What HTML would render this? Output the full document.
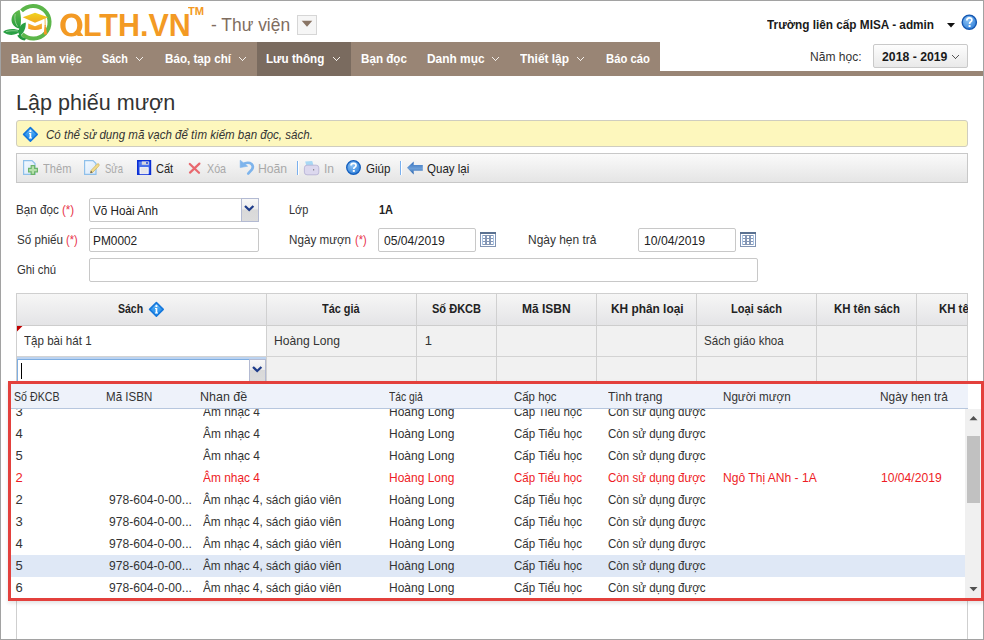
<!DOCTYPE html>
<html><head><meta charset="utf-8"><title>Lập phiếu mượn</title>
<style>
html,body{margin:0;padding:0;}
body{width:984px;height:640px;overflow:hidden;position:relative;background:#fff;font-family:"Liberation Sans",sans-serif;}
.a{position:absolute;box-sizing:border-box;}
.t{position:absolute;white-space:nowrap;transform-origin:0 0;}
svg{position:absolute;overflow:visible;}
</style></head>
<body>
<!-- logo -->
<svg style="left:0;top:0" width="56" height="44" viewBox="0 0 56 44">
  <defs>
    <linearGradient id="capg" x1="0" y1="0" x2="0" y2="1"><stop offset="0" stop-color="#f0d41e"/><stop offset="1" stop-color="#f2a91c"/></linearGradient>
    <linearGradient id="leafg" x1="0" y1="0" x2="0" y2="1"><stop offset="0" stop-color="#62ba4a"/><stop offset="1" stop-color="#239c3e"/></linearGradient>
    <linearGradient id="capb" x1="0" y1="0" x2="0" y2="1"><stop offset="0" stop-color="#f7b534"/><stop offset="1" stop-color="#f39a1c"/></linearGradient>
  </defs>
  <path d="M21.5 10.9 A16.3 16.3 0 1 1 22.3 34.3" fill="none" stroke="#5cb64a" stroke-width="4"/>
  <path d="M19.5 9.8 C14 12 11 16 11.6 21 C12.2 25 15.5 28 19.8 28.6 C21.4 24 21.4 15 19.5 9.8 Z" fill="url(#leafg)"/>
  <path d="M15.2 14 C14.4 18 15 23 17.6 26.5" fill="none" stroke="#c8e8c0" stroke-width="0.6"/>
  <path d="M3 32 C7 28.6 14 28.2 20.8 30.8 C17 35.4 9 36.6 3 32 Z" fill="#2aa044"/>
  <path d="M6 31.6 C10 30.6 14 30.6 18 31" fill="none" stroke="#bfe4bb" stroke-width="0.6"/>
  <path d="M25.8 22.6 C21 23.6 18.6 27.6 18.6 32 C18.6 34 19 35.4 19.6 36 C23.6 33.6 26 28.6 25.8 22.6 Z" fill="#2aa044"/>
  <path d="M17.2 35.6 C19 38.6 21.4 40.4 24.6 40.6 L26.4 38.6 C23.4 38 21.4 36.6 20.4 34.4 Z" fill="#21973c"/>
  <path d="M22.7 17.2 L35 12.7 L48.1 17.2 L35 22.7 Z" fill="url(#capg)"/>
  <path d="M28.2 23.4 L35 26.2 L41.9 23.4 L41.9 28.8 Q35 31.2 28.2 28.8 Z" fill="url(#capb)"/>
  <path d="M45 17.6 L45.2 25.4" stroke="#f2b640" stroke-width="0.9"/>
  <circle cx="45.2" cy="25.8" r="0.9" fill="#f39a24"/>
  <path d="M44.4 26.4 L46 26.4 L47 34.4 L43.8 34.4 Z" fill="#f39a24"/>
</svg>
<svg style="left:0;top:0" width="100" height="44"><path fill-rule="evenodd" fill="#f39a24" d="M71.35 13.5 C78 13.5 82.4 18.3 82.4 25 C82.4 31.7 78 36.5 71.35 36.5 C64.7 36.5 60.3 31.7 60.3 25 C60.3 18.3 64.7 13.5 71.35 13.5 Z M71.35 17.5 C67.6 17.5 65.5 20.6 65.5 25.2 C65.5 29.9 67.6 33 71.35 33 C75.1 33 77.2 29.9 77.2 25.2 C77.2 20.6 75.1 17.5 71.35 17.5 Z"/><path fill="#f39a24" d="M74.6 31.2 L78.6 29.6 L83.4 35.9 L77.6 35.9 Z"/></svg>
<!-- thu vien dropdown -->
<div class="a" style="left:297px;top:15px;width:20px;height:20px;border:1px solid #d6d6d6;background:#f6f6f6;"></div>
<svg style="left:301px;top:20px" width="12" height="8"><path d="M0.7 0.8 L11.3 0.8 L6 6.8 Z" fill="#8a7565"/></svg>
<!-- user dropdown triangle + help -->
<svg style="left:946px;top:22px" width="10" height="7"><path d="M1 1 L9 1 L5 5.5 Z" fill="#111"/></svg>
<svg style="left:961px;top:14px" width="17" height="17" viewBox="0 0 17 17">
  <defs><radialGradient id="hg" cx="0.4" cy="0.35" r="0.7"><stop offset="0" stop-color="#8cc4f6"/><stop offset="1" stop-color="#2f7ed8"/></radialGradient></defs>
  <circle cx="8.3" cy="8.2" r="7.1" fill="url(#hg)" stroke="#1456b0" stroke-width="1.4"/>
  <path d="M5.8 6.4 Q5.8 3.9 8.4 3.9 Q10.9 3.9 10.9 6.1 Q10.9 7.4 9.5 8.1 Q8.6 8.6 8.6 9.9" fill="none" stroke="#fff" stroke-width="1.7"/>
  <rect x="7.6" y="11.1" width="2" height="1.9" fill="#fff"/>
</svg>
<!-- nav -->
<div class="a" style="left:0;top:42px;width:660px;height:34px;background:#998575;"></div>
<div class="a" style="left:660px;top:71px;width:324px;height:5px;background:#998575;"></div>
<div class="a" style="left:257px;top:42px;width:94px;height:34px;background:#7a6b5f;"></div>
<svg style="left:0;top:0" width="984" height="80" shape-rendering="crispEdges"><g fill="#f4f0ec"><rect x="136" y="57" width="1" height="1"/><rect x="137" y="58" width="1" height="1"/><rect x="138" y="59" width="1" height="1"/><rect x="139" y="60" width="1" height="1"/><rect x="140" y="59" width="1" height="1"/><rect x="141" y="58" width="1" height="1"/><rect x="142" y="57" width="1" height="1"/><rect x="239" y="57" width="1" height="1"/><rect x="240" y="58" width="1" height="1"/><rect x="241" y="59" width="1" height="1"/><rect x="242" y="60" width="1" height="1"/><rect x="243" y="59" width="1" height="1"/><rect x="244" y="58" width="1" height="1"/><rect x="245" y="57" width="1" height="1"/><rect x="333" y="57" width="1" height="1"/><rect x="334" y="58" width="1" height="1"/><rect x="335" y="59" width="1" height="1"/><rect x="336" y="60" width="1" height="1"/><rect x="337" y="59" width="1" height="1"/><rect x="338" y="58" width="1" height="1"/><rect x="339" y="57" width="1" height="1"/><rect x="492" y="57" width="1" height="1"/><rect x="493" y="58" width="1" height="1"/><rect x="494" y="59" width="1" height="1"/><rect x="495" y="60" width="1" height="1"/><rect x="496" y="59" width="1" height="1"/><rect x="497" y="58" width="1" height="1"/><rect x="498" y="57" width="1" height="1"/><rect x="577" y="57" width="1" height="1"/><rect x="578" y="58" width="1" height="1"/><rect x="579" y="59" width="1" height="1"/><rect x="580" y="60" width="1" height="1"/><rect x="581" y="59" width="1" height="1"/><rect x="582" y="58" width="1" height="1"/><rect x="583" y="57" width="1" height="1"/></g></svg>
<!-- year box -->
<div class="a" style="left:873px;top:44px;width:95px;height:24px;border:1px solid #c9c9c9;border-radius:2px;background:linear-gradient(#fdfdfd,#e9e9e9);"></div>
<svg style="left:0;top:0" width="984" height="80" shape-rendering="crispEdges"><g fill="#555"><rect x="952" y="55" width="1" height="1"/><rect x="953" y="56" width="1" height="1"/><rect x="954" y="57" width="1" height="1"/><rect x="955" y="58" width="1" height="1"/><rect x="956" y="57" width="1" height="1"/><rect x="957" y="56" width="1" height="1"/><rect x="958" y="55" width="1" height="1"/></g></svg>
<!-- info box -->
<div class="a" style="left:16px;top:120px;width:952px;height:27px;border:1px solid #cfcdc0;border-radius:3px;background:#fdf7bd;"></div>
<svg style="left:22px;top:126px" width="17" height="17" viewBox="0 0 17 17">
  <defs><linearGradient id="ig" x1="0" y1="0" x2="0" y2="1"><stop offset="0" stop-color="#9cd2fa"/><stop offset="0.45" stop-color="#3a9cf0"/><stop offset="1" stop-color="#1a88ec"/></linearGradient></defs>
  <path d="M8.4 1.6 L15.2 8.4 L8.4 15.2 L1.6 8.4 Z" fill="url(#ig)" stroke="#1477dc" stroke-width="1.6" stroke-linejoin="round"/>
  <rect x="7.5" y="4.2" width="1.8" height="1.8" fill="#fff"/>
  <path d="M7 7 L9.3 7 L9.3 11.6 L10 11.6 L10 12.6 L6.9 12.6 L6.9 11.6 L7.6 11.6 L7.6 8 L7 8 Z" fill="#fff"/>
</svg>
<!-- toolbar -->
<div class="a" style="left:16px;top:153px;width:952px;height:30px;border:1px solid #c8c8c8;background:linear-gradient(#fafafa,#e5e5e5);"></div>
<!-- icon: them -->
<svg style="left:0;top:0" width="984" height="200">
  <defs>
    <linearGradient id="docg" x1="0" y1="0" x2="1" y2="1"><stop offset="0" stop-color="#f4faff"/><stop offset="1" stop-color="#d6e6f8"/></linearGradient>
    <linearGradient id="flg" x1="0" y1="0" x2="0" y2="1"><stop offset="0" stop-color="#5d86f2"/><stop offset="1" stop-color="#2a50e0"/></linearGradient>
    <linearGradient id="ag2" x1="0" y1="0" x2="0" y2="1"><stop offset="0" stop-color="#2f6cbc"/><stop offset="0.55" stop-color="#6d9fd8"/><stop offset="1" stop-color="#1f5ca8"/></linearGradient>
  </defs>
  <!-- them doc -->
  <path d="M23.6 160.6 L32 160.6 L35 163.6 L35 174.4 L23.6 174.4 Z" fill="url(#docg)" stroke="#8fc0ea" stroke-width="1.2"/>
  <path d="M28.6 165.6 L32.6 165.6 L32.6 168.6 L37.4 168.6 L37.4 171.6 L32.6 171.6 L32.6 174.4 L28.6 174.4 L28.6 171.6 L28.6 171.6 Z" fill="none"/>
  <path d="M31.2 165.6 L34.6 165.6 L34.6 168.4 L37.4 168.4 L37.4 171.8 L34.6 171.8 L34.6 174.4 L31.2 174.4 L31.2 171.8 L28.6 171.8 L28.6 168.4 L31.2 168.4 Z" fill="#b6e0ac" stroke="#6cb46a" stroke-width="1.2"/>
  <!-- sua doc -->
  <path d="M84.6 160.6 L93 160.6 L96 163.6 L96 174.4 L84.6 174.4 Z" fill="url(#docg)" stroke="#8fc0ea" stroke-width="1.2"/>
  <path d="M91 170.5 L97 164.2 Q98.2 163.2 99 164.2 Q99.6 165.2 98.6 166.2 L92.6 172.4 L90.4 173 Z" fill="#f2dc8c" stroke="#d2b460" stroke-width="0.8"/>
  <path d="M90.4 173 L91 170.8 L92.6 172.4 Z" fill="#555"/>
  <!-- save -->
  <rect x="137.8" y="160.8" width="12.6" height="13.4" fill="url(#flg)" stroke="#0a2ed6" stroke-width="1.6"/>
  <rect x="141.8" y="161.4" width="7" height="3.4" fill="#d8d8de"/>
  <rect x="146.2" y="162" width="1.6" height="2" fill="#2a4fe0"/>
  <rect x="140" y="167.6" width="8.2" height="6.2" fill="#e6e6ea" stroke="#fff" stroke-width="0.8"/>
  <!-- xoa -->
  <path d="M189.8 164 L199 172.8 M199.4 163.6 L190 172.6" stroke="#e8686e" stroke-width="2.2" stroke-linecap="round"/>
  <!-- hoan -->
  <path d="M244.5 163.4 Q249 162 251.5 164 Q254 166.5 252 169.5 L248.2 173.6" fill="none" stroke="#7eb4ec" stroke-width="2.6" stroke-linecap="round"/>
  <path d="M240.2 160.2 L247.6 166.2 L240.2 167.6 Z" fill="#7eb4ec" stroke="#7eb4ec" stroke-width="0.6" stroke-linejoin="round"/>
  <!-- sep -->
  <rect x="297" y="161" width="1" height="14" fill="#7ab0ee"/>
  <rect x="298" y="161" width="1" height="14" fill="#fff"/>
  <!-- printer -->
  <path d="M305.2 161.6 L312.2 161 L313.6 165.8 L306.4 166.4 Z" fill="#a8d8f4"/>
  <rect x="304.4" y="165.2" width="14.4" height="9.6" rx="2.6" fill="#dcd8ee" stroke="#b8b4d6" stroke-width="0.9"/>
  <rect x="313" y="169.2" width="1.2" height="1.2" fill="#777"/>
  <!-- help -->
  <circle cx="353.5" cy="167.5" r="6.8" fill="url(#hg)" stroke="#125ebe" stroke-width="1.3"/>
  <path d="M351 165.6 Q351 163.4 353.6 163.4 Q356 163.4 356 165.4 Q356 166.7 354.7 167.3 Q353.8 167.8 353.8 169" fill="none" stroke="#fff" stroke-width="1.7"/>
  <rect x="352.8" y="170" width="2" height="1.9" fill="#fff"/>
  <!-- sep -->
  <rect x="400" y="161" width="1" height="14" fill="#7ab0ee"/>
  <rect x="401" y="161" width="1" height="14" fill="#fff"/>
  <!-- back arrow -->
  <path d="M407 167.7 L413.7 161.4 L413.7 164.9 L422.8 164.9 L422.8 170.8 L413.7 170.8 L413.7 174.6 Z" fill="url(#ag2)"/>
</svg>
<!-- form inputs -->
<div class="a" style="left:89px;top:198px;width:170px;height:24px;border:1px solid #c8c8c8;border-radius:2px;background:#fff;"></div>
<div class="a" style="left:241px;top:198px;width:18px;height:24px;border:1px solid #b3bad2;background:linear-gradient(#f8f8f8 0%,#ececec 45%,#d9d9d9 50%,#dcdcdc 100%);"></div>
<svg style="left:244px;top:205px" width="11" height="7"><path d="M1 1 L5.2 5 L9.4 1" fill="none" stroke="#1f3d8a" stroke-width="2.3"/></svg>
<div class="a" style="left:89px;top:228px;width:170px;height:24px;border:1px solid #c8c8c8;border-radius:2px;background:#fff;"></div>
<div class="a" style="left:89px;top:258px;width:669px;height:24px;border:1px solid #c8c8c8;border-radius:2px;background:#fff;"></div>
<div class="a" style="left:378px;top:228px;width:98px;height:24px;border:1px solid #c8c8c8;border-radius:2px;background:#fff;"></div>
<div class="a" style="left:638px;top:228px;width:98px;height:24px;border:1px solid #c8c8c8;border-radius:2px;background:#fff;"></div>
<svg style="left:480px;top:232px" width="16" height="15" viewBox="0 0 16 15" shape-rendering="crispEdges"><rect x="0" y="0" width="16" height="15" fill="#8194b3"/><rect x="1" y="2" width="14" height="12" fill="#fff"/><rect x="0" y="0" width="16" height="2" fill="#5b7292"/><rect x="2" y="3" width="12" height="10" fill="#8497b6"/><rect x="3" y="4" width="2" height="2" fill="#fff"/><rect x="3" y="7" width="2" height="2" fill="#fff"/><rect x="3" y="10" width="2" height="2" fill="#fff"/><rect x="7" y="4" width="2" height="2" fill="#fff"/><rect x="7" y="7" width="2" height="2" fill="#fff"/><rect x="7" y="10" width="2" height="2" fill="#fff"/><rect x="11" y="4" width="2" height="2" fill="#fff"/><rect x="11" y="7" width="2" height="2" fill="#fff"/><rect x="11" y="10" width="2" height="2" fill="#fff"/><rect x="2" y="3" width="1" height="10" fill="#a9c4e6"/><rect x="13" y="3" width="1" height="10" fill="#a9c4e6"/></svg>
<svg style="left:740px;top:232px" width="16" height="15" viewBox="0 0 16 15" shape-rendering="crispEdges"><rect x="0" y="0" width="16" height="15" fill="#8194b3"/><rect x="1" y="2" width="14" height="12" fill="#fff"/><rect x="0" y="0" width="16" height="2" fill="#5b7292"/><rect x="2" y="3" width="12" height="10" fill="#8497b6"/><rect x="3" y="4" width="2" height="2" fill="#fff"/><rect x="3" y="7" width="2" height="2" fill="#fff"/><rect x="3" y="10" width="2" height="2" fill="#fff"/><rect x="7" y="4" width="2" height="2" fill="#fff"/><rect x="7" y="7" width="2" height="2" fill="#fff"/><rect x="7" y="10" width="2" height="2" fill="#fff"/><rect x="11" y="4" width="2" height="2" fill="#fff"/><rect x="11" y="7" width="2" height="2" fill="#fff"/><rect x="11" y="10" width="2" height="2" fill="#fff"/><rect x="2" y="3" width="1" height="10" fill="#a9c4e6"/><rect x="13" y="3" width="1" height="10" fill="#a9c4e6"/></svg>
<!-- grid -->
<div class="a" style="left:16px;top:293px;width:952px;height:360px;border:1px solid #cfcfcf;background:#fff;"></div>
<div class="a" style="left:17px;top:294px;width:950px;height:31px;background:linear-gradient(#f6f6f6,#e4e4e6);"></div>
<div class="a" style="left:17px;top:325px;width:950px;height:1px;background:#cdcdcd;"></div>
<div class="a" style="left:267px;top:326px;width:700px;height:60px;background:#f1f1f1;"></div>
<div class="a" style="left:17px;top:356px;width:950px;height:1px;background:#d3d3d3;"></div>
<div class="a" style="left:266px;top:294px;width:1px;height:92px;background:#d0d0d0;"></div>
<div class="a" style="left:416px;top:294px;width:1px;height:92px;background:#d0d0d0;"></div>
<div class="a" style="left:496px;top:294px;width:1px;height:92px;background:#d0d0d0;"></div>
<div class="a" style="left:596px;top:294px;width:1px;height:92px;background:#d0d0d0;"></div>
<div class="a" style="left:696px;top:294px;width:1px;height:92px;background:#d0d0d0;"></div>
<div class="a" style="left:816px;top:294px;width:1px;height:92px;background:#d0d0d0;"></div>
<div class="a" style="left:916px;top:294px;width:1px;height:92px;background:#d0d0d0;"></div>
<svg style="left:148px;top:301px" width="17" height="17" viewBox="0 0 17 17">
  <path d="M8.4 1.6 L15.2 8.4 L8.4 15.2 L1.6 8.4 Z" fill="url(#ig)" stroke="#1477dc" stroke-width="1.6" stroke-linejoin="round"/>
  <rect x="7.5" y="4.2" width="1.8" height="1.8" fill="#fff"/>
  <path d="M7 7 L9.3 7 L9.3 11.6 L10 11.6 L10 12.6 L6.9 12.6 L6.9 11.6 L7.6 11.6 L7.6 8 L7 8 Z" fill="#fff"/>
</svg>
<svg style="left:17px;top:326px" width="6" height="6"><path d="M0 0 L5.5 0 L0 5.5 Z" fill="#c00000"/></svg>
<!-- editor row -->
<div class="a" style="left:17px;top:357px;width:249px;height:2px;background:#bcd3f0;"></div>
<div class="a" style="left:17px;top:359px;width:249px;height:30px;border:1px solid #7eaee2;border-right:none;background:#fff;"></div>
<div class="a" style="left:249px;top:359px;width:17px;height:23px;border:1px solid #b3bad2;background:linear-gradient(#f8f8f8 0%,#ececec 45%,#d9d9d9 50%,#dcdcdc 100%);"></div>
<svg style="left:252px;top:366px" width="11" height="7"><path d="M1 1 L5.2 5 L9.4 1" fill="none" stroke="#1f3d8a" stroke-width="2.3"/></svg>
<div class="a" style="left:21px;top:363px;width:1px;height:16px;background:#000;"></div>
<!-- TEXTS placeholder before popup -->
<div class="t" style="left:82.63px;top:10.00px;font-size:31px;line-height:31px;color:#f39a24;font-weight:bold;transform:scaleX(0.9826);">LTH.VN</div>
<div class="t" style="left:188.00px;top:5.50px;font-size:11px;line-height:11px;color:#f39a24;font-weight:bold;transform:scaleX(1.0179);">TM</div>
<div class="t" style="left:210.80px;top:15.80px;font-size:18px;line-height:18px;color:#7f6d60;transform:scaleX(0.9672);">- Thư viện</div>
<div class="t" style="left:767.00px;top:18.30px;font-size:13px;line-height:13px;color:#1a1a1a;font-weight:bold;transform:scaleX(0.9062);">Trường liên cấp MISA - admin</div>
<div class="t" style="left:11.40px;top:51.60px;font-size:13px;line-height:13px;color:#ffffff;font-weight:bold;transform:scaleX(0.8921);">Bàn làm việc</div>
<div class="t" style="left:101.60px;top:51.60px;font-size:13px;line-height:13px;color:#ffffff;font-weight:bold;transform:scaleX(0.8352);">Sách</div>
<div class="t" style="left:164.80px;top:51.60px;font-size:13px;line-height:13px;color:#ffffff;font-weight:bold;transform:scaleX(0.8965);">Báo, tạp chí</div>
<div class="t" style="left:266.40px;top:51.60px;font-size:13px;line-height:13px;color:#ffffff;font-weight:bold;transform:scaleX(0.8961);">Lưu thông</div>
<div class="t" style="left:361.20px;top:51.60px;font-size:13px;line-height:13px;color:#ffffff;font-weight:bold;transform:scaleX(0.8952);">Bạn đọc</div>
<div class="t" style="left:426.80px;top:51.60px;font-size:13px;line-height:13px;color:#ffffff;font-weight:bold;transform:scaleX(0.9152);">Danh mục</div>
<div class="t" style="left:520.30px;top:51.60px;font-size:13px;line-height:13px;color:#ffffff;font-weight:bold;transform:scaleX(0.9176);">Thiết lập</div>
<div class="t" style="left:606.00px;top:51.60px;font-size:13px;line-height:13px;color:#ffffff;font-weight:bold;transform:scaleX(0.8671);">Báo cáo</div>
<div class="t" style="left:810.37px;top:49.90px;font-size:13px;line-height:13px;color:#333;transform:scaleX(0.9256);">Năm học:</div>
<div class="t" style="left:882.00px;top:49.90px;font-size:13px;line-height:13px;color:#1a1a1a;font-weight:bold;transform:scaleX(0.9427);">2018 - 2019</div>
<div class="t" style="left:16.02px;top:91.50px;font-size:22px;line-height:22px;color:#333;transform:scaleX(0.9798);">Lập phiếu mượn</div>
<div class="t" style="left:45.90px;top:127.90px;font-size:13px;line-height:13px;color:#333;font-style:italic;transform:scaleX(0.8868);">Có thể sử dụng mã vạch để tìm kiếm bạn đọc, sách.</div>
<div class="t" style="left:43.30px;top:161.70px;font-size:13px;line-height:13px;color:#a9a9a9;transform:scaleX(0.8549);">Thêm</div>
<div class="t" style="left:104.50px;top:161.70px;font-size:13px;line-height:13px;color:#a9a9a9;transform:scaleX(0.7291);">Sửa</div>
<div class="t" style="left:156.20px;top:161.70px;font-size:13px;line-height:13px;color:#222;transform:scaleX(0.8488);">Cất</div>
<div class="t" style="left:206.60px;top:161.70px;font-size:13px;line-height:13px;color:#a9a9a9;transform:scaleX(0.8242);">Xóa</div>
<div class="t" style="left:258.46px;top:161.70px;font-size:13px;line-height:13px;color:#a9a9a9;transform:scaleX(0.9381);">Hoãn</div>
<div class="t" style="left:323.67px;top:161.70px;font-size:13px;line-height:13px;color:#a9a9a9;transform:scaleX(0.9259);">In</div>
<div class="t" style="left:366.30px;top:161.70px;font-size:13px;line-height:13px;color:#222;transform:scaleX(0.8887);">Giúp</div>
<div class="t" style="left:427.00px;top:161.70px;font-size:13px;line-height:13px;color:#222;transform:scaleX(0.8870);">Quay lại</div>
<div class="t" style="left:15.70px;top:203.30px;font-size:13px;line-height:13px;color:#333;transform:scaleX(0.8961);">Bạn đọc</div>
<div class="t" style="left:61.50px;top:203.30px;font-size:13px;line-height:13px;color:#e8334a;transform:scaleX(0.8888);">(*)</div>
<div class="t" style="left:16.60px;top:233.00px;font-size:13px;line-height:13px;color:#333;transform:scaleX(0.8945);">Số phiếu</div>
<div class="t" style="left:66.00px;top:233.00px;font-size:13px;line-height:13px;color:#e8334a;transform:scaleX(0.8515);">(*)</div>
<div class="t" style="left:16.60px;top:263.00px;font-size:13px;line-height:13px;color:#333;transform:scaleX(0.8705);">Ghi chú</div>
<div class="t" style="left:93.00px;top:204.00px;font-size:13px;line-height:13px;color:#222;transform:scaleX(0.9002);">Võ Hoài Anh</div>
<div class="t" style="left:93.09px;top:234.00px;font-size:13px;line-height:13px;color:#222;transform:scaleX(0.9133);">PM0002</div>
<div class="t" style="left:288.96px;top:203.10px;font-size:13px;line-height:13px;color:#333;transform:scaleX(0.8412);">Lớp</div>
<div class="t" style="left:378.70px;top:203.10px;font-size:13px;line-height:13px;color:#222;font-weight:bold;transform:scaleX(0.8416);">1A</div>
<div class="t" style="left:288.90px;top:232.90px;font-size:13px;line-height:13px;color:#333;transform:scaleX(0.8968);">Ngày mượn</div>
<div class="t" style="left:355.10px;top:232.90px;font-size:13px;line-height:13px;color:#e8334a;transform:scaleX(0.8515);">(*)</div>
<div class="t" style="left:384.30px;top:234.00px;font-size:13px;line-height:13px;color:#222;transform:scaleX(0.9332);">05/04/2019</div>
<div class="t" style="left:527.58px;top:232.80px;font-size:13px;line-height:13px;color:#333;transform:scaleX(0.9191);">Ngày hẹn trả</div>
<div class="t" style="left:644.20px;top:234.00px;font-size:13px;line-height:13px;color:#222;transform:scaleX(0.9378);">10/04/2019</div>
<div class="t" style="left:117.90px;top:302.00px;font-size:13px;line-height:13px;color:#222;font-weight:bold;transform:scaleX(0.8095);">Sách</div>
<div class="t" style="left:322.20px;top:302.00px;font-size:13px;line-height:13px;color:#222;font-weight:bold;transform:scaleX(0.8405);">Tác giả</div>
<div class="t" style="left:432.00px;top:302.00px;font-size:13px;line-height:13px;color:#222;font-weight:bold;transform:scaleX(0.8486);">Số ĐKCB</div>
<div class="t" style="left:522.40px;top:302.00px;font-size:13px;line-height:13px;color:#222;font-weight:bold;transform:scaleX(0.9228);">Mã ISBN</div>
<div class="t" style="left:611.00px;top:302.00px;font-size:13px;line-height:13px;color:#222;font-weight:bold;transform:scaleX(0.9133);">KH phân loại</div>
<div class="t" style="left:731.00px;top:302.00px;font-size:13px;line-height:13px;color:#222;font-weight:bold;transform:scaleX(0.8496);">Loại sách</div>
<div class="t" style="left:833.90px;top:302.00px;font-size:13px;line-height:13px;color:#222;font-weight:bold;transform:scaleX(0.8764);">KH tên sách</div>
<div class="t" style="left:938.80px;top:302.00px;font-size:13px;line-height:13px;color:#222;font-weight:bold;transform:scaleX(0.8764);">KH tên sách</div>
<div class="t" style="left:24.00px;top:334.30px;font-size:13px;line-height:13px;color:#333;transform:scaleX(0.8909);">Tập bài hát 1</div>
<div class="t" style="left:273.67px;top:334.30px;font-size:13px;line-height:13px;color:#333;transform:scaleX(0.9295);">Hoàng Long</div>
<div class="t" style="left:424.80px;top:334.30px;font-size:13px;line-height:13px;color:#333;">1</div>
<div class="t" style="left:704.00px;top:334.30px;font-size:13px;line-height:13px;color:#333;transform:scaleX(0.8895);">Sách giáo khoa</div>
<div class="a" style="left:968px;top:293px;width:15px;height:34px;background:#fff;"></div>
<!-- frame border -->
<div class="a" style="left:0;top:0;width:984px;height:640px;border:1px solid #a2a2a2;pointer-events:none;"></div>
<!-- popup -->
<div class="a" style="left:8px;top:381px;width:976px;height:220px;border:3px solid #e3403c;background:#fff;box-shadow:0 2px 4px rgba(0,0,0,0.12);"></div>
<div class="a" style="left:11px;top:384px;width:957px;height:25px;background:#eef2fa;border-bottom:1px solid #b7c7de;"></div>
<div class="t" style="left:14.40px;top:389.80px;font-size:13px;line-height:13px;color:#333;transform:scaleX(0.8188);">Số ĐKCB</div>
<div class="t" style="left:106.11px;top:389.80px;font-size:13px;line-height:13px;color:#333;transform:scaleX(0.8889);">Mã ISBN</div>
<div class="t" style="left:200.04px;top:389.80px;font-size:13px;line-height:13px;color:#333;transform:scaleX(0.9599);">Nhan đề</div>
<div class="t" style="left:389.00px;top:389.80px;font-size:13px;line-height:13px;color:#333;transform:scaleX(0.7926);">Tác giả</div>
<div class="t" style="left:514.00px;top:389.80px;font-size:13px;line-height:13px;color:#333;transform:scaleX(0.8790);">Cấp học</div>
<div class="t" style="left:608.00px;top:389.80px;font-size:13px;line-height:13px;color:#333;transform:scaleX(0.9182);">Tình trạng</div>
<div class="t" style="left:722.80px;top:389.80px;font-size:13px;line-height:13px;color:#333;transform:scaleX(0.8951);">Người mượn</div>
<div class="t" style="left:879.69px;top:389.80px;font-size:13px;line-height:13px;color:#333;transform:scaleX(0.9124);">Ngày hẹn trả</div>
<div class="a" style="left:11px;top:409px;width:954px;height:189px;overflow:hidden;">
  <div class="a" style="left:0;top:146px;width:954px;height:22px;background:#dfe8f6;"></div>
<div class="t" style="left:4.50px;top:-4.50px;font-size:13px;line-height:13px;color:#333;">3</div>
<div class="t" style="left:191.80px;top:-4.50px;font-size:13px;line-height:13px;color:#333;transform:scaleX(0.9158);">Âm nhạc 4</div>
<div class="t" style="left:377.88px;top:-4.50px;font-size:13px;line-height:13px;color:#333;transform:scaleX(0.9223);">Hoàng Long</div>
<div class="t" style="left:503.00px;top:-4.50px;font-size:13px;line-height:13px;color:#333;transform:scaleX(0.8883);">Cấp Tiểu học</div>
<div class="t" style="left:597.00px;top:-4.50px;font-size:13px;line-height:13px;color:#333;transform:scaleX(0.8897);">Còn sử dụng được</div>
<div class="t" style="left:4.50px;top:17.50px;font-size:13px;line-height:13px;color:#333;">4</div>
<div class="t" style="left:191.80px;top:17.50px;font-size:13px;line-height:13px;color:#333;transform:scaleX(0.9158);">Âm nhạc 4</div>
<div class="t" style="left:377.88px;top:17.50px;font-size:13px;line-height:13px;color:#333;transform:scaleX(0.9223);">Hoàng Long</div>
<div class="t" style="left:503.00px;top:17.50px;font-size:13px;line-height:13px;color:#333;transform:scaleX(0.8883);">Cấp Tiểu học</div>
<div class="t" style="left:597.00px;top:17.50px;font-size:13px;line-height:13px;color:#333;transform:scaleX(0.8897);">Còn sử dụng được</div>
<div class="t" style="left:4.50px;top:39.50px;font-size:13px;line-height:13px;color:#333;">5</div>
<div class="t" style="left:191.80px;top:39.50px;font-size:13px;line-height:13px;color:#333;transform:scaleX(0.9158);">Âm nhạc 4</div>
<div class="t" style="left:377.88px;top:39.50px;font-size:13px;line-height:13px;color:#333;transform:scaleX(0.9223);">Hoàng Long</div>
<div class="t" style="left:503.00px;top:39.50px;font-size:13px;line-height:13px;color:#333;transform:scaleX(0.8883);">Cấp Tiểu học</div>
<div class="t" style="left:597.00px;top:39.50px;font-size:13px;line-height:13px;color:#333;transform:scaleX(0.8897);">Còn sử dụng được</div>
<div class="t" style="left:4.50px;top:61.50px;font-size:13px;line-height:13px;color:#ee1c25;">2</div>
<div class="t" style="left:191.80px;top:61.50px;font-size:13px;line-height:13px;color:#ee1c25;transform:scaleX(0.9158);">Âm nhạc 4</div>
<div class="t" style="left:377.88px;top:61.50px;font-size:13px;line-height:13px;color:#ee1c25;transform:scaleX(0.9223);">Hoàng Long</div>
<div class="t" style="left:503.00px;top:61.50px;font-size:13px;line-height:13px;color:#ee1c25;transform:scaleX(0.8883);">Cấp Tiểu học</div>
<div class="t" style="left:597.00px;top:61.50px;font-size:13px;line-height:13px;color:#ee1c25;transform:scaleX(0.8897);">Còn sử dụng được</div>
<div class="t" style="left:711.77px;top:61.50px;font-size:13px;line-height:13px;color:#ee1c25;transform:scaleX(0.9288);">Ngô Thị ANh - 1A</div>
<div class="t" style="left:869.60px;top:61.50px;font-size:13px;line-height:13px;color:#ee1c25;transform:scaleX(0.9316);">10/04/2019</div>
<div class="t" style="left:4.50px;top:83.50px;font-size:13px;line-height:13px;color:#333;">2</div>
<div class="t" style="left:97.80px;top:83.50px;font-size:13px;line-height:13px;color:#333;transform:scaleX(0.9323);">978-604-0-00...</div>
<div class="t" style="left:191.80px;top:83.50px;font-size:13px;line-height:13px;color:#333;transform:scaleX(0.9077);">Âm nhạc 4, sách giáo viên</div>
<div class="t" style="left:377.88px;top:83.50px;font-size:13px;line-height:13px;color:#333;transform:scaleX(0.9223);">Hoàng Long</div>
<div class="t" style="left:503.00px;top:83.50px;font-size:13px;line-height:13px;color:#333;transform:scaleX(0.8883);">Cấp Tiểu học</div>
<div class="t" style="left:597.00px;top:83.50px;font-size:13px;line-height:13px;color:#333;transform:scaleX(0.8897);">Còn sử dụng được</div>
<div class="t" style="left:4.50px;top:105.50px;font-size:13px;line-height:13px;color:#333;">3</div>
<div class="t" style="left:97.80px;top:105.50px;font-size:13px;line-height:13px;color:#333;transform:scaleX(0.9323);">978-604-0-00...</div>
<div class="t" style="left:191.80px;top:105.50px;font-size:13px;line-height:13px;color:#333;transform:scaleX(0.9077);">Âm nhạc 4, sách giáo viên</div>
<div class="t" style="left:377.88px;top:105.50px;font-size:13px;line-height:13px;color:#333;transform:scaleX(0.9223);">Hoàng Long</div>
<div class="t" style="left:503.00px;top:105.50px;font-size:13px;line-height:13px;color:#333;transform:scaleX(0.8883);">Cấp Tiểu học</div>
<div class="t" style="left:597.00px;top:105.50px;font-size:13px;line-height:13px;color:#333;transform:scaleX(0.8897);">Còn sử dụng được</div>
<div class="t" style="left:4.50px;top:127.50px;font-size:13px;line-height:13px;color:#333;">4</div>
<div class="t" style="left:97.80px;top:127.50px;font-size:13px;line-height:13px;color:#333;transform:scaleX(0.9323);">978-604-0-00...</div>
<div class="t" style="left:191.80px;top:127.50px;font-size:13px;line-height:13px;color:#333;transform:scaleX(0.9077);">Âm nhạc 4, sách giáo viên</div>
<div class="t" style="left:377.88px;top:127.50px;font-size:13px;line-height:13px;color:#333;transform:scaleX(0.9223);">Hoàng Long</div>
<div class="t" style="left:503.00px;top:127.50px;font-size:13px;line-height:13px;color:#333;transform:scaleX(0.8883);">Cấp Tiểu học</div>
<div class="t" style="left:597.00px;top:127.50px;font-size:13px;line-height:13px;color:#333;transform:scaleX(0.8897);">Còn sử dụng được</div>
<div class="t" style="left:4.50px;top:149.50px;font-size:13px;line-height:13px;color:#333;">5</div>
<div class="t" style="left:97.80px;top:149.50px;font-size:13px;line-height:13px;color:#333;transform:scaleX(0.9323);">978-604-0-00...</div>
<div class="t" style="left:191.80px;top:149.50px;font-size:13px;line-height:13px;color:#333;transform:scaleX(0.9077);">Âm nhạc 4, sách giáo viên</div>
<div class="t" style="left:377.88px;top:149.50px;font-size:13px;line-height:13px;color:#333;transform:scaleX(0.9223);">Hoàng Long</div>
<div class="t" style="left:503.00px;top:149.50px;font-size:13px;line-height:13px;color:#333;transform:scaleX(0.8883);">Cấp Tiểu học</div>
<div class="t" style="left:597.00px;top:149.50px;font-size:13px;line-height:13px;color:#333;transform:scaleX(0.8897);">Còn sử dụng được</div>
<div class="t" style="left:4.50px;top:171.50px;font-size:13px;line-height:13px;color:#333;">6</div>
<div class="t" style="left:97.80px;top:171.50px;font-size:13px;line-height:13px;color:#333;transform:scaleX(0.9323);">978-604-0-00...</div>
<div class="t" style="left:191.80px;top:171.50px;font-size:13px;line-height:13px;color:#333;transform:scaleX(0.9077);">Âm nhạc 4, sách giáo viên</div>
<div class="t" style="left:377.88px;top:171.50px;font-size:13px;line-height:13px;color:#333;transform:scaleX(0.9223);">Hoàng Long</div>
<div class="t" style="left:503.00px;top:171.50px;font-size:13px;line-height:13px;color:#333;transform:scaleX(0.8883);">Cấp Tiểu học</div>
<div class="t" style="left:597.00px;top:171.50px;font-size:13px;line-height:13px;color:#333;transform:scaleX(0.8897);">Còn sử dụng được</div>
</div>
<!-- scrollbar -->
<div class="a" style="left:965px;top:409px;width:16px;height:189px;background:#f0f0f0;"></div>
<div class="a" style="left:967px;top:436px;width:13px;height:67px;background:#c1c1c1;"></div>
<svg style="left:965px;top:409px" width="16" height="189">
  <path d="M4.5 11.2 L8.5 7 L12.5 11.2 Z" fill="#505050"/>
  <path d="M4.5 178 L8.5 182.2 L12.5 178 Z" fill="#505050"/>
</svg>

</body></html>
